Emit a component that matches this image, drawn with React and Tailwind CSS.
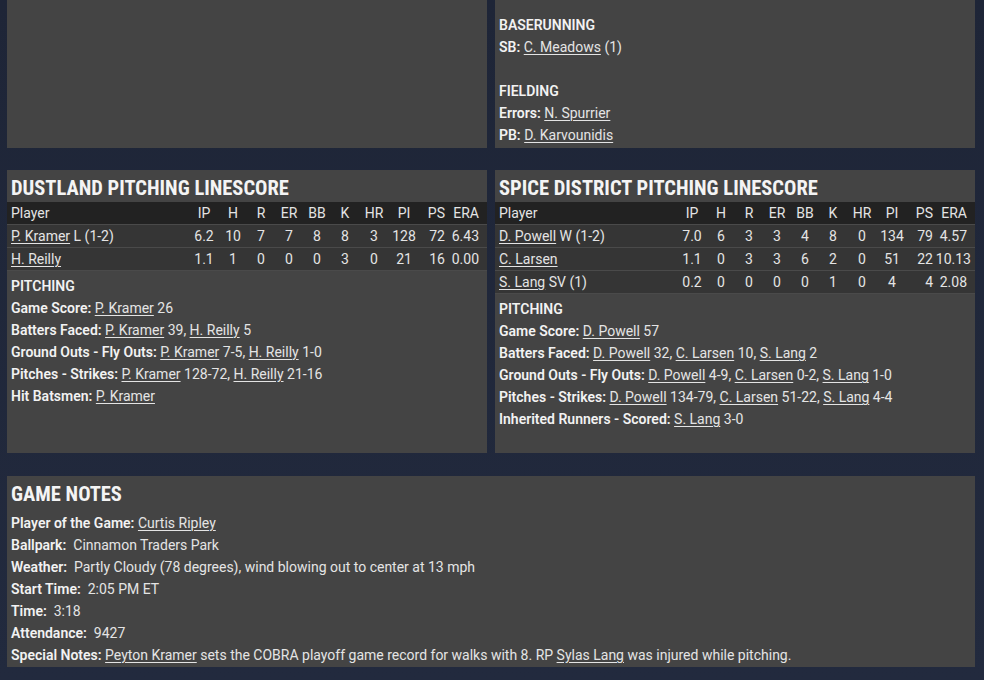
import React from 'react';

// Pitching linescore data
const dustland = [
  { name: 'P. Kramer', note: 'L (1-2)', stats: ['6.2', '10', '7', '7', '8', '8', '3', '128', '72', '6.43'] },
  { name: 'H. Reilly', note: '', stats: ['1.1', '1', '0', '0', '0', '3', '0', '21', '16', '0.00'] },
];

const spice = [
  { name: 'D. Powell', note: 'W (1-2)', stats: ['7.0', '6', '3', '3', '4', '8', '0', '134', '79', '4.57'] },
  { name: 'C. Larsen', note: '', stats: ['1.1', '0', '3', '3', '6', '2', '0', '51', '22', '10.13'] },
  { name: 'S. Lang', note: 'SV (1)', stats: ['0.2', '0', '0', '0', '0', '1', '0', '4', '4', '2.08'] },
];

const cols = ['IP', 'H', 'R', 'ER', 'BB', 'K', 'HR', 'PI', 'PS', 'ERA'];

const rowGrid =
  'grid grid-cols-[1fr_30px_28px_28px_28px_28px_28px_30px_30px_26px_34px] pr-[8px] h-[23px] items-center border-b border-[#4a4a4a]';

const Link = ({ children }) => (
  <span className="underline underline-offset-2 decoration-1">{children}</span>
);

const Label = ({ children }) => <span className="font-semibold text-[#f2f2f2]">{children}</span>;

const Cell = ({ value, index }) => {
  if (index === 8) return <span className="text-right">{value}</span>;
  if (index === 9)
    return <span className={value.length > 4 ? 'text-right -mr-[4px]' : 'text-right'}>{value}</span>;
  return <span className="text-center">{value}</span>;
};

const Heading = ({ children }) => (
  <h2 className="h-[32px] pt-[5px] pl-[4px] leading-[27px] text-[20.5px] font-bold uppercase text-[#f4f4f4] font-['Roboto_Condensed',Roboto,sans-serif]">
    {children}
  </h2>
);

const Linescore = ({ title, rows, children }) => (
  <div className="bg-[#444444] pb-[23px]">
    <Heading>{title}</Heading>
    <div className="bg-[#222222]">
      <div className={rowGrid}>
        <span className="pl-[4px]">Player</span>
        {cols.map((c, i) => (
          <Cell key={c} value={c} index={i} />
        ))}
      </div>
    </div>
    {rows.map((r) => (
      <div key={r.name} className={`${rowGrid} bg-[#353535]`}>
        <span className="pl-[4px]">
          <Link>{r.name}</Link>
          {r.note && ` ${r.note}`}
        </span>
        {r.stats.map((s, i) => (
          <Cell key={i} value={s} index={i} />
        ))}
      </div>
    ))}
    <div className="mt-[4px] px-[4px] leading-[22px]">
      <div className="font-semibold text-[#f2f2f2]">PITCHING</div>
      {children}
    </div>
  </div>
);

export default function App() {
  return (
    <div className="min-h-screen bg-gradient-to-b from-[#1e2537] to-[#222a3e] pl-[7px] pr-[9px] pb-[13px] text-[14px] text-[#e4e4e4] font-['Roboto',sans-serif]">
      {/* Batting extras */}
      <div className="grid grid-cols-2 gap-x-[8px]">
        <div className="bg-[#444444] h-[148px]" />
        <div className="bg-[#444444] h-[148px] pt-[14px] px-[4px] leading-[22px]">
          <div className="font-semibold text-[#f2f2f2]">BASERUNNING</div>
          <div>
            <Label>SB:</Label> <Link>C. Meadows</Link> (1)
          </div>
          <div>&nbsp;</div>
          <div className="font-semibold text-[#f2f2f2]">FIELDING</div>
          <div>
            <Label>Errors:</Label> <Link>N. Spurrier</Link>
          </div>
          <div>
            <Label>PB:</Label> <Link>D. Karvounidis</Link>
          </div>
        </div>
      </div>

      {/* Pitching linescores */}
      <div className="grid grid-cols-2 gap-x-[8px] mt-[22px]">
        <Linescore title="Dustland Pitching Linescore" rows={dustland}>
          <div>
            <Label>Game Score:</Label> <Link>P. Kramer</Link> 26
          </div>
          <div>
            <Label>Batters Faced:</Label> <Link>P. Kramer</Link> 39, <Link>H. Reilly</Link> 5
          </div>
          <div>
            <Label>Ground Outs - Fly Outs:</Label> <Link>P. Kramer</Link> 7-5, <Link>H. Reilly</Link> 1-0
          </div>
          <div>
            <Label>Pitches - Strikes:</Label> <Link>P. Kramer</Link> 128-72, <Link>H. Reilly</Link> 21-16
          </div>
          <div>
            <Label>Hit Batsmen:</Label> <Link>P. Kramer</Link>
          </div>
        </Linescore>
        <Linescore title="Spice District Pitching Linescore" rows={spice}>
          <div>
            <Label>Game Score:</Label> <Link>D. Powell</Link> 57
          </div>
          <div>
            <Label>Batters Faced:</Label> <Link>D. Powell</Link> 32, <Link>C. Larsen</Link> 10,{' '}
            <Link>S. Lang</Link> 2
          </div>
          <div>
            <Label>Ground Outs - Fly Outs:</Label> <Link>D. Powell</Link> 4-9, <Link>C. Larsen</Link> 0-2,{' '}
            <Link>S. Lang</Link> 1-0
          </div>
          <div>
            <Label>Pitches - Strikes:</Label> <Link>D. Powell</Link> 134-79, <Link>C. Larsen</Link> 51-22,{' '}
            <Link>S. Lang</Link> 4-4
          </div>
          <div>
            <Label>Inherited Runners - Scored:</Label> <Link>S. Lang</Link> 3-0
          </div>
        </Linescore>
      </div>

      {/* Game notes */}
      <div className="bg-[#444444] mt-[23px] pb-[1px]">
        <Heading>Game Notes</Heading>
        <div className="mt-[4px] px-[4px] leading-[22px]">
          <div>
            <Label>Player of the Game:</Label> <Link>Curtis Ripley</Link>
          </div>
          <div>
            <Label>Ballpark:</Label>&nbsp; Cinnamon Traders Park
          </div>
          <div>
            <Label>Weather:</Label>&nbsp; Partly Cloudy (78 degrees), wind blowing out to center at 13 mph
          </div>
          <div>
            <Label>Start Time:</Label>&nbsp; 2:05 PM ET
          </div>
          <div>
            <Label>Time:</Label>&nbsp; 3:18
          </div>
          <div>
            <Label>Attendance:</Label>&nbsp; 9427
          </div>
          <div>
            <Label>Special Notes:</Label> <Link>Peyton Kramer</Link> sets the COBRA playoff game record for walks
            with 8. RP <Link>Sylas Lang</Link> was injured while pitching.
          </div>
        </div>
      </div>
    </div>
  );
}
